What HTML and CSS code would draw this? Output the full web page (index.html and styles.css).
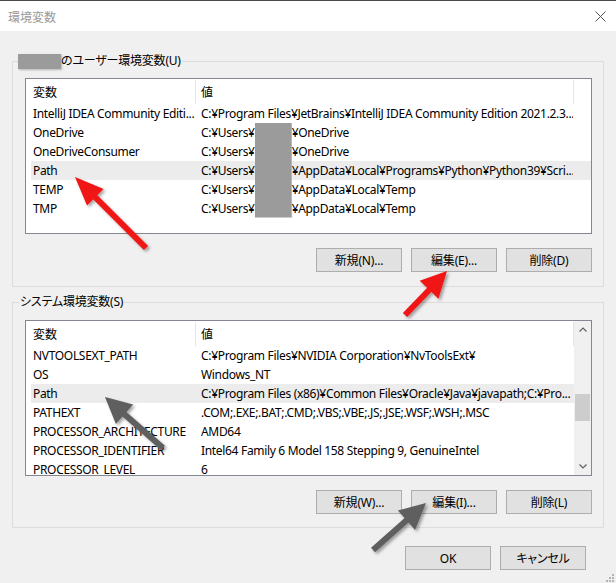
FILE: index.html
```html
<!DOCTYPE html>
<html lang="ja">
<head>
<meta charset="utf-8">
<title>環境変数</title>
<link rel="stylesheet" href="styles.css">
</head>
<body>
<div class="window">
  <div class="titlebar">
    <span class="title">環境変数</span>
    <svg class="close" width="11" height="11" viewBox="0 0 11 11"><path d="M0.5 0.5 L10.5 10.5 M10.5 0.5 L0.5 10.5" stroke="#555" stroke-width="1" fill="none"/></svg>
  </div>
  <div class="content">
    <fieldset class="group group-user">
      <legend><span class="blur-legend"></span>のユーザー環境変数(U)</legend>
      <div class="list list-user">
        <div class="list-main">
          <div class="list-head"><div class="hcell hcell-name">変数</div><div class="hcell hcell-value">値</div></div>
          <div class="rows">
            <div class="row"><span class="c1">IntelliJ IDEA Community Editi...</span><span class="c2">C:¥Program Files¥JetBrains¥IntelliJ IDEA Community Edition 2021.2.3...</span></div>
            <div class="row"><span class="c1">OneDrive</span><span class="c2">C:¥Users¥<span class="blur-name"></span>¥OneDrive</span></div>
            <div class="row"><span class="c1">OneDriveConsumer</span><span class="c2">C:¥Users¥<span class="blur-name"></span>¥OneDrive</span></div>
            <div class="row selected"><span class="c1">Path</span><span class="c2">C:¥Users¥<span class="blur-name"></span>¥AppData¥Local¥Programs¥Python¥Python39¥Scri...</span></div>
            <div class="row"><span class="c1">TEMP</span><span class="c2">C:¥Users¥<span class="blur-name"></span>¥AppData¥Local¥Temp</span></div>
            <div class="row"><span class="c1">TMP</span><span class="c2">C:¥Users¥<span class="blur-name last"></span>¥AppData¥Local¥Temp</span></div>
          </div>
        </div>
      </div>
      <div class="btns">
        <button class="btn">新規(N)...</button>
        <button class="btn">編集(E)...</button>
        <button class="btn">削除(D)</button>
      </div>
    </fieldset>

    <fieldset class="group group-sys">
      <legend>システム環境変数(S)</legend>
      <div class="list list-sys">
        <div class="list-main">
          <div class="list-head"><div class="hcell hcell-name">変数</div><div class="hcell hcell-value">値</div></div>
          <div class="rows">
            <div class="row"><span class="c1">NVTOOLSEXT_PATH</span><span class="c2">C:¥Program Files¥NVIDIA Corporation¥NvToolsExt¥</span></div>
            <div class="row"><span class="c1">OS</span><span class="c2">Windows_NT</span></div>
            <div class="row selected"><span class="c1">Path</span><span class="c2">C:¥Program Files (x86)¥Common Files¥Oracle¥Java¥javapath;C:¥Pro...</span></div>
            <div class="row"><span class="c1">PATHEXT</span><span class="c2">.COM;.EXE;.BAT;.CMD;.VBS;.VBE;.JS;.JSE;.WSF;.WSH;.MSC</span></div>
            <div class="row"><span class="c1">PROCESSOR_ARCHITECTURE</span><span class="c2">AMD64</span></div>
            <div class="row"><span class="c1">PROCESSOR_IDENTIFIER</span><span class="c2">Intel64 Family 6 Model 158 Stepping 9, GenuineIntel</span></div>
            <div class="row"><span class="c1">PROCESSOR_LEVEL</span><span class="c2">6</span></div>
          </div>
        </div>
        <div class="scrollbar">
          <div class="sb-btn"><svg width="8" height="5" viewBox="0 0 8 5"><polyline points="0.5,4.5 4,1 7.5,4.5" fill="none" stroke="#606060" stroke-width="1.2"/></svg></div>
          <div class="sb-track"><div class="sb-thumb"></div></div>
          <div class="sb-btn"><svg width="8" height="5" viewBox="0 0 8 5"><polyline points="0.5,0.5 4,4 7.5,0.5" fill="none" stroke="#606060" stroke-width="1.2"/></svg></div>
        </div>
      </div>
      <div class="btns">
        <button class="btn">新規(W)...</button>
        <button class="btn">編集(I)...</button>
        <button class="btn">削除(L)</button>
      </div>
    </fieldset>
  </div>

  <div class="footer">
    <button class="btn">OK</button>
    <button class="btn">キャンセル</button>
  </div>

  <svg class="arrows" width="616" height="583" viewBox="0 0 616 583">
    <defs>
      <filter id="sh" x="-20%" y="-20%" width="140%" height="140%">
        <feDropShadow dx="2" dy="2" stdDeviation="1.5" flood-color="#000" flood-opacity="0.35"/>
      </filter>
    </defs>
    <g filter="url(#sh)" fill="#f01414" stroke="#f01414">
      <line x1="146" y1="248" x2="93" y2="195" stroke-width="6"/>
      <polygon points="75,177 103.6,189.0 87.0,205.6" stroke="none"/>
      <line x1="405" y1="315" x2="431" y2="288" stroke-width="6"/>
      <polygon points="447,271 438.5,298.8 419.7,280.8" stroke="none"/>
    </g>
    <g filter="url(#sh)" fill="#5e5e5e" stroke="#5e5e5e">
      <line x1="163" y1="448" x2="123" y2="413" stroke-width="6"/>
      <polygon points="105,397 133.1,404.4 115.9,424.0" stroke="none"/>
      <line x1="373" y1="550" x2="408" y2="519" stroke-width="6"/>
      <polygon points="426,503 415.1,530.0 397.9,510.6" stroke="none"/>
    </g>
  </svg>

  <svg class="grip" width="10" height="10" viewBox="0 0 10 10">
    <rect x="8" y="2" width="2" height="2" fill="#b4b4b4"/>
    <rect x="5" y="5" width="2" height="2" fill="#b4b4b4"/>
    <rect x="8" y="5" width="2" height="2" fill="#b4b4b4"/>
    <rect x="2" y="8" width="2" height="2" fill="#b4b4b4"/>
    <rect x="5" y="8" width="2" height="2" fill="#b4b4b4"/>
    <rect x="8" y="8" width="2" height="2" fill="#b4b4b4"/>
  </svg>
</div>
</body>
</html>
```

FILE: styles.css
```css
* { box-sizing: border-box; }

body {
  margin: 0;
  background: #f0f0f0;
  font-family: "Noto Sans", "Noto Sans CJK JP", sans-serif;
  font-size: 12px;
  color: #000;
}

.window {
  position: relative;
  width: 616px;
  height: 583px;
  overflow: hidden;
  background: #f0f0f0;
}

.titlebar {
  height: 31px;
  border-top: 1px solid #4a4a4a;
  background: #fff;
  display: flex;
  align-items: center;
  justify-content: space-between;
  padding: 0 10px 0 8px;
}

.title {
  color: #9a9a9a;
  font-family: "Noto Sans CJK JP", sans-serif;
  font-size: 12px;
}

.content {
  padding: 0 12px;
}

.group {
  margin: 0;
  min-width: 0;
  border: 1px solid #dcdcdc;
  padding: 0 11px 14px 6px;
}

.group-user { margin-top: 22px; }
.group-sys { margin-top: 7px; padding-bottom: 13px; }

.group legend {
  padding: 0 1px;
  height: 16px;
  line-height: 16px;
  font-family: "Noto Sans", "Noto Sans CJK JP", sans-serif;
  font-feature-settings: "palt";
  letter-spacing: -0.2px;
  display: flex;
  align-items: center;
}

.blur-legend {
  display: inline-block;
  width: 43px;
  height: 15px;
  background: #9b9b9b;
  box-shadow: 1px 1px 2px rgba(0,0,0,0.25);
  margin-left: -2px;
}

.list {
  margin-left: 6px;
  height: 156px;
  border: 1px solid #828790;
  background: #fff;
  display: flex;
  overflow: hidden;
}

.list-user { margin-top: 9px; }
.list-sys { margin-top: 10px; }

.list-main {
  flex: 1;
  min-width: 0;
}

.list-head {
  display: flex;
  height: 25px;
  padding-top: 1px;
}

.hcell {
  line-height: 24px;
  font-family: "Noto Sans CJK JP", sans-serif;
  border-right: 1px solid #e5e5e5;
  white-space: nowrap;
}

.hcell-name { width: 170px; padding-left: 7px; }
.hcell-value { width: 378px; padding-left: 5px; }

.rows {
  padding-left: 5px;
}

.row {
  display: grid;
  grid-template-columns: 164px 378px;
  height: 19px;
  line-height: 19px;
  white-space: nowrap;
}

.row.selected { background: #ececec; }

.c1, .c2 {
  overflow: hidden;
  letter-spacing: -0.32px;
}

.c1 { padding-left: 2px; }
.c2 { padding-left: 6px; }

.blur-name {
  display: inline-block;
  width: 37px;
  height: 19px;
  vertical-align: top;
  background: #9b9b9b;
  border-right: 1px solid #b8b8b8;
}

.blur-name.last {
  height: 18px;
  box-shadow: 0 1px 1px rgba(0,0,0,0.2);
}

.scrollbar {
  width: 17px;
  flex: none;
  background: #f0f0f0;
  display: flex;
  flex-direction: column;
}

.sb-btn {
  height: 17px;
  display: flex;
  align-items: center;
  justify-content: center;
}

.sb-track {
  flex: 1;
}

.sb-thumb {
  margin: 56px 1px 0 1px;
  height: 27px;
  background: #cdcdcd;
}

.btns {
  display: flex;
  justify-content: flex-end;
  gap: 9px;
  margin-top: 14px;
}

.btn {
  width: 86px;
  height: 24px;
  padding: 0;
  background: #e1e1e1;
  border: 1px solid #adadad;
  font-family: "Noto Sans", "Noto Sans CJK JP", sans-serif;
  font-feature-settings: "palt";
  font-size: 12px;
  letter-spacing: -0.2px;
  color: #000;
}

.footer {
  display: flex;
  justify-content: flex-end;
  gap: 9px;
  margin-top: 18px;
  padding-right: 30px;
}

.arrows {
  position: absolute;
  left: 0;
  top: 0;
  pointer-events: none;
}

.grip {
  position: absolute;
  right: 2px;
  bottom: 1px;
}
```
